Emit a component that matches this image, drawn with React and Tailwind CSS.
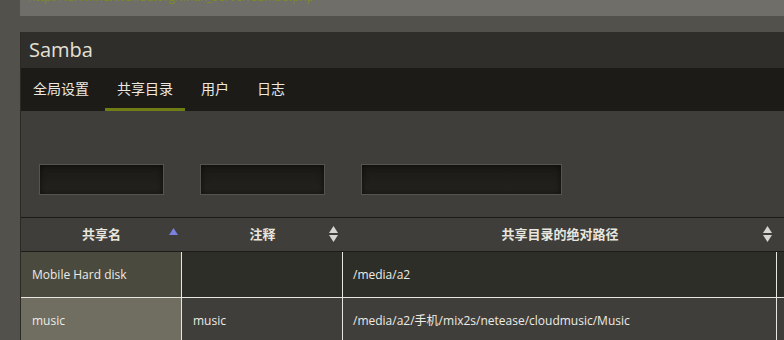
import React from "react";

const font = { fontFamily: '"Open Sans", "Noto Sans CJK SC", sans-serif' };

const SortBoth = () => (
  <svg className="w-[9px] h-[16px]" viewBox="0 0 9 16">
    <path d="M4.5 0 L9 7 H0 Z" fill="#d8d6d0" />
    <path d="M4.5 16 L9 9 H0 Z" fill="#d8d6d0" />
  </svg>
);

const SortUp = () => (
  <svg className="w-[9px] h-[7px]" viewBox="0 0 9 7">
    <path d="M4.5 0 L9 7 H0 Z" fill="#7b7fe0" />
  </svg>
);

const tabs = ["全局设置", "共享目录", "用户", "日志"];

const rows = [
  { name: "Mobile Hard disk", note: "", path: "/media/a2", odd: true },
  { name: "music", note: "music", path: "/media/a2/手机/mix2s/netease/cloudmusic/Music", odd: false },
];

export default function App() {
  return (
    <div className="w-[784px] h-[340px] overflow-hidden bg-[#52514c] pl-5" style={font}>
      <div className="h-4 bg-[#6f6e68] overflow-hidden">
        <p className="text-[12px] leading-4 text-[#7d8c1e] pl-2 -mt-[11px]">
          http://fanmindx.vanda.org/linux_server/samba.php
        </p>
      </div>

      <div className="mt-4 border-l border-[#2a2925] w-[800px]">
        <div className="h-9 bg-[#2f2e2a] flex items-center px-2">
          <h1 className="text-[20px] text-[#e4e0d4]">Samba</h1>
        </div>

        <div className="h-[43px] bg-[#1c1b17] flex gap-1 items-stretch">
          {tabs.map((t, i) => (
            <div
              key={t}
              className={`px-3 flex items-center text-[14px] text-[#ebe9e2] border-b-[3px] ${
                i === 1 ? "border-[#6f7d14]" : "border-transparent"
              }`}
            >
              {t}
            </div>
          ))}
        </div>

        <div className="bg-[#3f3e3a] pt-[53px] pb-[22px] pl-[18px] flex gap-9">
          <div className="w-[125px] h-[31px] border border-[#55544f] bg-gradient-to-b from-[#1a1915] to-[#24231f] shadow-[inset_0_0_6px_rgba(0,0,0,0.6)]" />
          <div className="w-[125px] h-[31px] border border-[#55544f] bg-gradient-to-b from-[#1a1915] to-[#24231f] shadow-[inset_0_0_6px_rgba(0,0,0,0.6)]" />
          <div className="w-[201px] h-[31px] border border-[#55544f] bg-gradient-to-b from-[#1a1915] to-[#24231f] shadow-[inset_0_0_6px_rgba(0,0,0,0.6)]" />
        </div>

        <div className="flex h-[35px] bg-[#3f3e3a] border-y border-[#1c1b17] text-[13px] font-bold text-[#e8e6df]">
          <div className="w-[161px] relative flex items-center justify-center">
            共享名
            <span className="absolute right-[4px] top-[10px]"><SortUp /></span>
          </div>
          <div className="w-[161px] relative flex items-center justify-center">
            注释
            <span className="absolute right-[5px] top-[8px]"><SortBoth /></span>
          </div>
          <div className="w-[434px] relative flex items-center justify-center">
            共享目录的绝对路径
            <span className="absolute right-[5px] top-[8px]"><SortBoth /></span>
          </div>
          <div className="flex-1" />
        </div>

        {rows.map((r) => (
          <div key={r.name} className="flex h-[46px] border-b border-[#e8e6e0] text-[12px] text-[#ecebe6]">
            <div className={`w-[161px] border-r border-[#e8e6e0] flex items-center px-[11px] ${r.odd ? "bg-[#4b4a3e]" : "bg-[#706d61]"}`}>
              {r.name}
            </div>
            <div className={`w-[161px] border-r border-[#e8e6e0] flex items-center px-[11px] ${r.odd ? "bg-[#2e2e29]" : "bg-[#3f3e3a]"}`}>
              {r.note}
            </div>
            <div className={`w-[434px] border-r border-[#e8e6e0] flex items-center px-[10px] ${r.odd ? "bg-[#2e2e29]" : "bg-[#3f3e3a]"}`}>
              {r.path}
            </div>
            <div className={`flex-1 ${r.odd ? "bg-[#2e2e29]" : "bg-[#3f3e3a]"}`} />
          </div>
        ))}
      </div>
    </div>
  );
}
